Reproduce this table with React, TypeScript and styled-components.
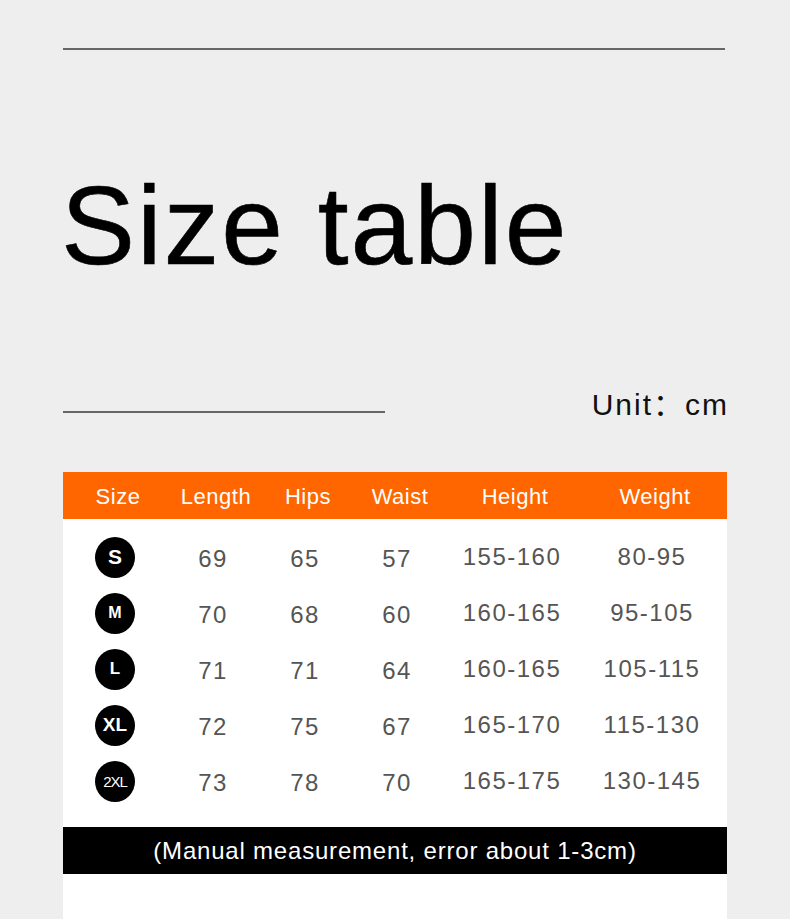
import React from "react";
import styled, { createGlobalStyle } from "styled-components";

const GlobalStyle = createGlobalStyle`
  html, body {
    margin: 0;
    padding: 0;
    background: #eeeeee;
  }
  body {
    font-family: "Liberation Sans", Arial, "Noto Sans CJK SC", sans-serif;
  }
`;

const rows = [
  { size: "S", fs: 21, bold: true, vals: ["69", "65", "57", "155-160", "80-95"] },
  { size: "M", fs: 16, bold: true, vals: ["70", "68", "60", "160-165", "95-105"] },
  { size: "L", fs: 17, bold: true, vals: ["71", "71", "64", "160-165", "105-115"] },
  { size: "XL", fs: 19, bold: true, vals: ["72", "75", "67", "165-170", "115-130"] },
  { size: "2XL", fs: 15, bold: false, vals: ["73", "78", "70", "165-175", "130-145"] },
];

const heads = ["Size", "Length", "Hips", "Waist", "Height", "Weight"];

function App() {
  return (
    <Page>
      <GlobalStyle />
      <TopRule />
      <Title>Size table</Title>
      <UnitRow>
        <ShortRule />
        <Unit>Unit：cm</Unit>
      </UnitRow>
      <Sheet>
        <HeadRow>
          {heads.map((h) => (
            <HeadCell key={h}>{h}</HeadCell>
          ))}
        </HeadRow>
        <Body>
          {rows.map((r) => (
            <Row key={r.size}>
              <Cell>
                <Badge $fs={r.fs} $bold={r.bold}>
                  {r.size}
                </Badge>
              </Cell>
              {r.vals.map((v, i) => (
                <Cell key={i} $lift={i >= 3}>
                  {v}
                </Cell>
              ))}
            </Row>
          ))}
        </Body>
        <Note>(Manual measurement, error about 1-3cm)</Note>
        <Foot />
      </Sheet>
    </Page>
  );
}

const Page = styled.div`
  width: 790px;
  min-height: 919px;
  padding: 48px 0 0 63px;
  box-sizing: border-box;
  overflow: hidden;
`;

const TopRule = styled.div`
  width: 662px;
  height: 2px;
  background: #666666;
`;

const Title = styled.h1`
  margin: 121px 0 0 -2px;
  font-size: 111px;
  line-height: 1;
  font-weight: 400;
  letter-spacing: 2px;
  color: #000;
  -webkit-text-stroke: 0.6px #000;
`;

const UnitRow = styled.div`
  margin-top: 108px;
  width: 666px;
  display: flex;
  justify-content: space-between;
  align-items: flex-end;
`;

const ShortRule = styled.div`
  width: 322px;
  height: 2px;
  background: #666666;
  margin-bottom: 7px;
`;

const Unit = styled.div`
  font-size: 30px;
  line-height: 1;
  letter-spacing: 2px;
  color: #111;
`;

const Sheet = styled.div`
  margin-top: 52px;
  width: 664px;
  background: #ffffff;
`;

const cols = "104px 92px 92px 92px 138px 142px";

const HeadRow = styled.div`
  display: grid;
  grid-template-columns: ${cols};
  height: 47px;
  align-items: center;
  padding-left: 3px;
  background: #ff6600;
`;

const HeadCell = styled.div`
  text-align: center;
  color: #ffffff;
  font-size: 22px;
  letter-spacing: 0.5px;
  padding-top: 2px;
`;

const Body = styled.div`
  padding: 11px 0 17px;
`;

const Row = styled.div`
  display: grid;
  grid-template-columns: ${cols};
  height: 56px;
  align-items: center;
`;

const Cell = styled.div<{ $lift?: boolean }>`
  display: flex;
  justify-content: center;
  color: #555555;
  font-size: 24px;
  letter-spacing: 1.5px;
  margin-top: ${(p) => (p.$lift ? "-2px" : "2px")};
`;

const Badge = styled.div<{ $fs: number; $bold: boolean }>`
  width: 40px;
  height: 41px;
  border-radius: 50%;
  background: #000;
  color: #fff;
  display: flex;
  align-items: center;
  justify-content: center;
  font-size: ${(p) => p.$fs}px;
  font-weight: ${(p) => (p.$bold ? 700 : 400)};
  letter-spacing: ${(p) => (p.$bold ? "0" : "-1px")};
  margin-top: -4px;
`;

const Note = styled.div`
  height: 47px;
  background: #000;
  color: #fff;
  font-size: 24px;
  letter-spacing: 0.8px;
  display: flex;
  align-items: center;
  justify-content: center;
`;

const Foot = styled.div`
  height: 60px;
`;

export default App;
